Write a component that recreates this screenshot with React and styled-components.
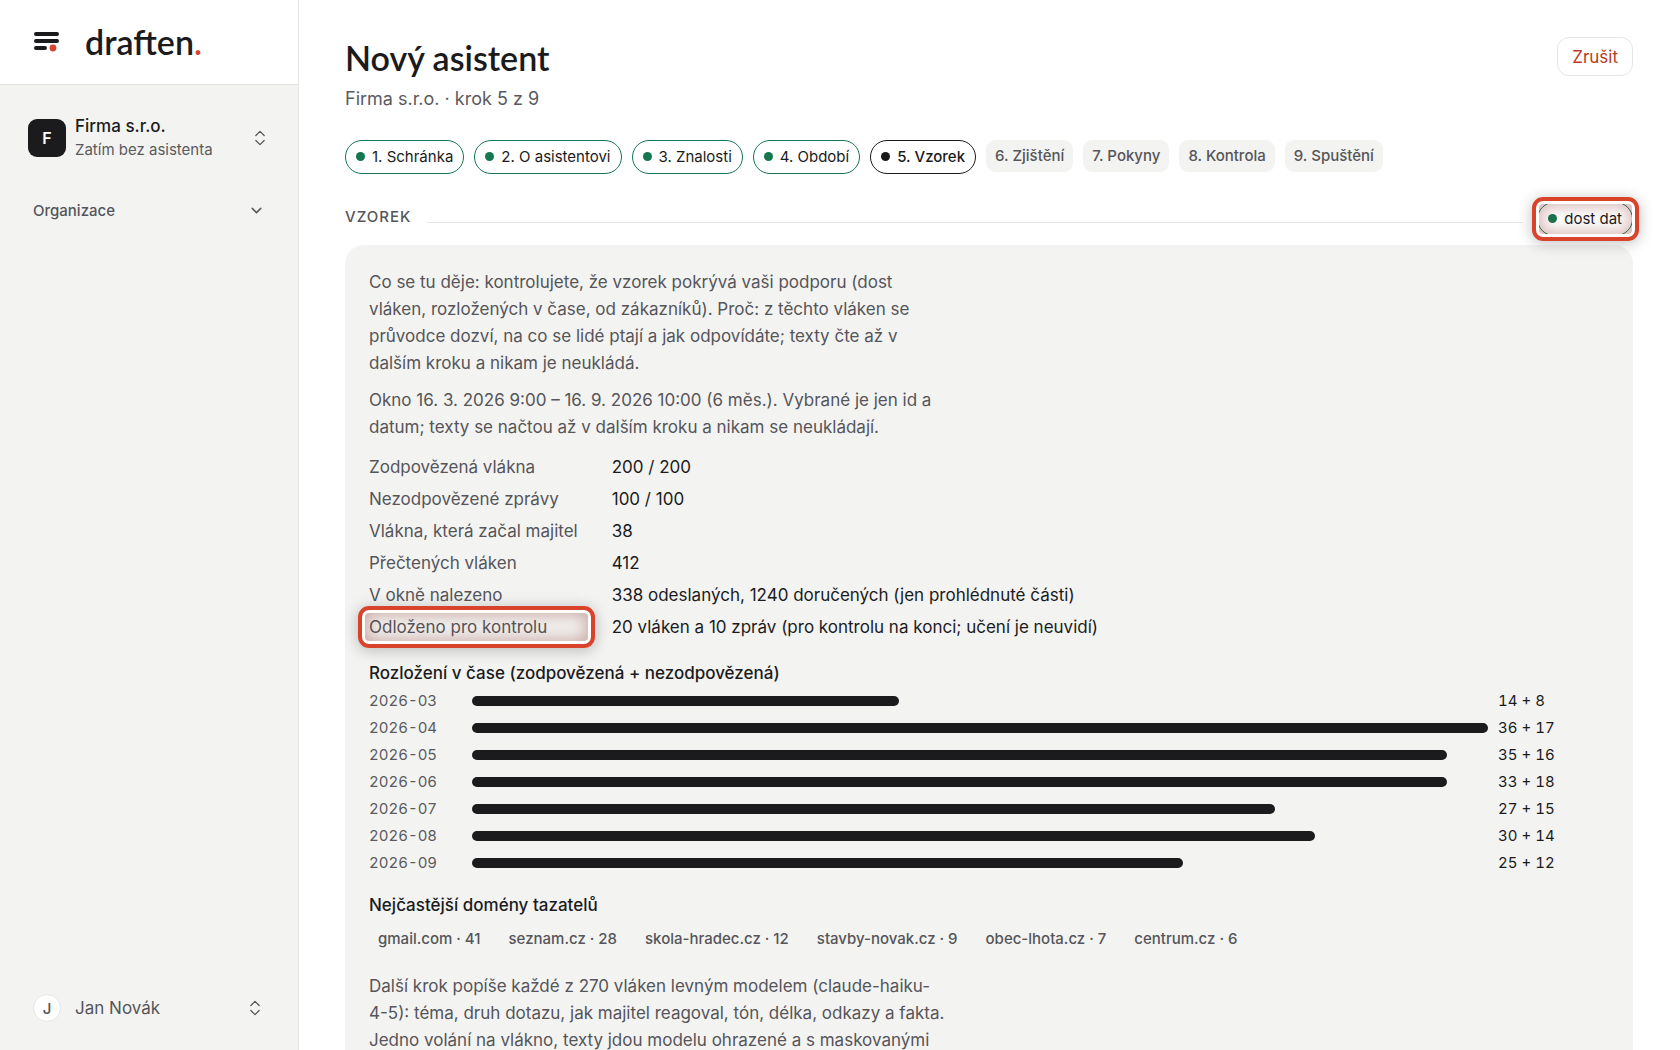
import React from 'react'
import styled, { createGlobalStyle, css } from 'styled-components'
import { ChevronDown, ChevronsUpDown } from 'lucide-react'

const GlobalStyle = createGlobalStyle`
  * {
    box-sizing: border-box;
  }

  body {
    margin: 0;
    background: #fff;
    color: #1b1b1d;
    font-family: Inter, 'Liberation Sans', sans-serif;
    font-size: 17px;
    line-height: 27px;
  }

  h1, h2, h3, p, ul, dl, dd {
    margin: 0;
    padding: 0;
  }

  button {
    font: inherit;
    color: inherit;
    background: none;
    border: 0;
    padding: 0;
    text-align: left;
    cursor: pointer;
  }
`

const Layout = styled.div`
  display: flex;
  height: 100vh;
`

const Sidebar = styled.aside`
  display: flex;
  flex-direction: column;
  flex: 0 0 299px;
  background: #f3f3f1;
  border-right: 1px solid #e6e6e4;
`

const Brand = styled.a`
  display: flex;
  align-items: center;
  gap: 24px;
  height: 85px;
  padding: 0 33px;
  background: #fff;
  border-bottom: 1px solid #e2e2e0;
  color: inherit;
  text-decoration: none;
`

const Wordmark = styled.span`
  font-family: Lato, sans-serif;
  font-size: 34px;
  font-weight: 600;
  line-height: 40px;

  span {
    color: #d9432c;
  }
`

const SidebarBody = styled.div`
  display: flex;
  flex-direction: column;
  flex: 1;
  padding: 28px 28px 22px;
`

const OrgButton = styled.button`
  display: flex;
  align-items: center;
  gap: 9px;
  height: 50px;
`

const OrgAvatar = styled.span`
  display: flex;
  align-items: center;
  justify-content: center;
  width: 38px;
  height: 38px;
  border-radius: 9px;
  background: #1b1b1d;
  color: #fff;
  font-size: 16px;
  font-weight: 600;
`

const OrgText = styled.span`
  flex: 1;
  display: flex;
  flex-direction: column;
  line-height: 24px;
`

const OrgName = styled.span`
  font-size: 17px;
  font-weight: 500;
`

const OrgNote = styled.span`
  font-size: 15px;
  color: #5a5a5e;
`

const NavGroup = styled.button`
  display: flex;
  align-items: center;
  justify-content: space-between;
  margin-top: 34px;
  padding: 0 5px;
  font-size: 15px;
  font-weight: 500;
  color: #55555a;
`

const UserButton = styled.button`
  display: flex;
  align-items: center;
  gap: 14px;
  margin-top: auto;
  padding: 0 5px;
  height: 40px;
  color: #55555a;
`

const UserAvatar = styled.span`
  display: flex;
  align-items: center;
  justify-content: center;
  width: 28px;
  height: 28px;
  border: 1px solid #e6e6e4;
  border-radius: 50%;
  background: #fff;
  font-size: 15px;
  font-weight: 500;
`

const UserName = styled.span`
  flex: 1;
`

const Main = styled.main`
  flex: 1;
  min-width: 0;
  padding: 37px 47px;
  padding-left: 46px;
  overflow-y: auto;
  scrollbar-width: none;
`

const PageHeader = styled.header`
  display: flex;
  align-items: flex-start;
  justify-content: space-between;
`

const Title = styled.h1`
  font-family: Lato, sans-serif;
  font-size: 34px;
  font-weight: 600;
  line-height: 42px;
`

const Subtitle = styled.p`
  margin-top: 5px;
  font-size: 18px;
  line-height: 30px;
  color: #5a5a5e;
`

const CancelButton = styled.button`
  padding: 6px 14px 4px;
  border: 1px solid #e6e6e4;
  border-radius: 12px;
  background: #fff;
  color: #b93a26;
  font-size: 17px;
`

const Steps = styled.ol`
  display: flex;
  flex-wrap: wrap;
  align-items: flex-start;
  gap: 10px;
  margin: 26px 0 0;
  padding: 0;
  list-style: none;
`

const pillColors = {
  done: '#14774f',
  current: '#1b1b1d'
}

const Pill = styled.span`
  position: relative;
  display: inline-flex;
  align-items: center;
  gap: 7px;
  height: 34px;
  padding: 0 10px 2px;
  border: 1px solid ${props => pillColors[props.$state]};
  border-radius: 17px;
  font-size: 15px;
  font-weight: ${props => (props.$state === 'current' ? 500 : 400)};
  white-space: nowrap;

  &::before {
    content: '';
    width: 9px;
    height: 9px;
    border-radius: 50%;
    background: ${props => pillColors[props.$state]};
  }
`

const Chip = styled.span`
  display: inline-flex;
  align-items: center;
  height: 32px;
  padding: 0 9px 2px;
  border-radius: 9px;
  background: #f3f3f1;
  color: #55555a;
  font-size: 15px;
  font-weight: 500;
  white-space: nowrap;
`

const SectionHeader = styled.div`
  display: flex;
  align-items: center;
  gap: 14px;
  margin-top: 28px;

  &::before {
    content: '';
    order: 1;
    flex: 1;
    height: 1px;
    margin-top: 6px;
    background: #e6e6e2;
  }
`

const SectionTitle = styled.h2`
  padding: 0 2px 5px 0;
  font-size: 15px;
  font-weight: 500;
  letter-spacing: 1px;
  text-transform: uppercase;
  color: #55555a;
`

const SectionStatus = styled.div`
  order: 2;
  display: flex;
`

// red frame laid over an element that the guide points at
const highlight = css`
  &::after {
    content: '';
    position: absolute;
    inset: ${props => props.$inset};
    border: 4px solid #d9432c;
    border-radius: 11px;
    box-shadow:
      inset 0 0 0 3px #fff,
      inset 0 0 16px 5px rgba(130, 40, 30, 0.36),
      0 2px 14px 1px rgba(0, 0, 0, 0.22);
    pointer-events: none;
  }
`

const MarkedPill = styled(Pill)`
  ${highlight}
`

const Panel = styled.section`
  margin-top: 9px;
  padding: 24px;
  border-radius: 19px;
  background: #f3f3f1;
`

const Text = styled.p`
  max-width: 577px;
  margin-top: ${props => props.$top || 0}px;
  color: #55555a;
`

const Stats = styled.dl`
  display: grid;
  grid-template-columns: max-content 1fr;
  gap: 5px 34px;
  margin-top: 13px;
`

const Term = styled.dt`
  position: relative;
  color: #55555a;
  ${props => props.$inset && highlight}
`

const PanelTitle = styled.h3`
  margin-top: ${props => props.$top}px;
  font-size: 17px;
  font-weight: 500;
`

const Months = styled.ul`
  list-style: none;
`

const Month = styled.li`
  display: grid;
  grid-template-columns: 93px 1fr 111px;
  align-items: center;
  gap: 10px;
  font-size: 15px;
  font-variant-numeric: tabular-nums;
`

const MonthName = styled.span`
  color: #5a5a5e;
`

const Bar = styled.span`
  height: 10px;
  border-radius: 5px;
  background: #1b1b1d;
`

const Domains = styled.ul`
  display: flex;
  flex-wrap: wrap;
  gap: 10px;
  margin-top: 4px;
  list-style: none;
`

const steps = [
  { name: 'Schránka', state: 'done' },
  { name: 'O asistentovi', state: 'done' },
  { name: 'Znalosti', state: 'done' },
  { name: 'Období', state: 'done' },
  { name: 'Vzorek', state: 'current' },
  { name: 'Zjištění' },
  { name: 'Pokyny' },
  { name: 'Kontrola' },
  { name: 'Spuštění' }
]

const stats = [
  { term: 'Zodpovězená vlákna', value: '200 / 200' },
  { term: 'Nezodpovězené zprávy', value: '100 / 100' },
  { term: 'Vlákna, která začal majitel', value: '38' },
  { term: 'Přečtených vláken', value: '412' },
  { term: 'V okně nalezeno', value: '338 odeslaných, 1240 doručených (jen prohlédnuté části)' },
  {
    term: 'Odloženo pro kontrolu',
    value: '20 vláken a 10 zpráv (pro kontrolu na konci; učení je neuvidí)',
    inset: '-8px -17px -7px -11px'
  }
]

const months = [
  { name: '2026-03', answered: 14, open: 8 },
  { name: '2026-04', answered: 36, open: 17 },
  { name: '2026-05', answered: 35, open: 16 },
  { name: '2026-06', answered: 33, open: 18 },
  { name: '2026-07', answered: 27, open: 15 },
  { name: '2026-08', answered: 30, open: 14 },
  { name: '2026-09', answered: 25, open: 12 }
]

const domains = [
  ['gmail.com', 41],
  ['seznam.cz', 28],
  ['skola-hradec.cz', 12],
  ['stavby-novak.cz', 9],
  ['obec-lhota.cz', 7],
  ['centrum.cz', 6]
]

const busiest = Math.max(...months.map(m => m.answered + m.open))

const LogoMark = () => (
  <svg width="28" height="24" viewBox="0 0 28 24" aria-hidden="true">
    <g stroke="#1b1b1d" strokeWidth="4" strokeLinecap="round">
      <path d="M3 4h21M3 11h21M3 18h9" />
    </g>
    <circle cx="20" cy="18" r="3.4" fill="#d9432c" />
  </svg>
)

const AppSidebar = () => (
  <Sidebar>
    <Brand href="#">
      <LogoMark />
      <Wordmark>draften<span>.</span></Wordmark>
    </Brand>
    <SidebarBody>
      <OrgButton>
        <OrgAvatar>F</OrgAvatar>
        <OrgText>
          <OrgName>Firma s.r.o.</OrgName>
          <OrgNote>Zatím bez asistenta</OrgNote>
        </OrgText>
        <ChevronsUpDown size={20} strokeWidth={1.5} color="#55555a" />
      </OrgButton>
      <NavGroup>
        Organizace
        <ChevronDown size={17} strokeWidth={2} />
      </NavGroup>
      <UserButton>
        <UserAvatar>J</UserAvatar>
        <UserName>Jan Novák</UserName>
        <ChevronsUpDown size={20} strokeWidth={1.5} />
      </UserButton>
    </SidebarBody>
  </Sidebar>
)

const App = () => (
  <Layout>
    <GlobalStyle />
    <AppSidebar />
    <Main>
      <PageHeader>
        <div>
          <Title>Nový asistent</Title>
          <Subtitle>Firma s.r.o. · krok 5 z 9</Subtitle>
        </div>
        <CancelButton>Zrušit</CancelButton>
      </PageHeader>

      <Steps>
        {steps.map((step, i) => (
          <li key={step.name}>
            {step.state
              ? <Pill $state={step.state}>{i + 1}. {step.name}</Pill>
              : <Chip>{i + 1}. {step.name}</Chip>}
          </li>
        ))}
      </Steps>

      <SectionHeader>
        <SectionTitle>Vzorek</SectionTitle>
        <SectionStatus>
          <MarkedPill $state="done" $inset="-6px -7px -6px -6px">dost dat</MarkedPill>
        </SectionStatus>
      </SectionHeader>

      <Panel>
        <Text>
          Co se tu děje: kontrolujete, že vzorek pokrývá vaši podporu (dost vláken,
          rozložených v čase, od zákazníků). Proč: z těchto vláken se průvodce dozví, na co
          se lidé ptají a jak odpovídáte; texty čte až v dalším kroku a nikam je neukládá.
        </Text>
        <Text $top={10}>
          Okno 16. 3. 2026 9:00 – 16. 9. 2026 10:00 (6 měs.). Vybrané je jen id a datum;
          texty se načtou až v dalším kroku a nikam se neukládají.
        </Text>

        <Stats>
          {stats.map(row => (
            <React.Fragment key={row.term}>
              <Term $inset={row.inset}>{row.term}</Term>
              <dd>{row.value}</dd>
            </React.Fragment>
          ))}
        </Stats>

        <PanelTitle $top={19}>Rozložení v čase (zodpovězená + nezodpovězená)</PanelTitle>
        <Months>
          {months.map(m => (
            <Month key={m.name}>
              <MonthName>{m.name}</MonthName>
              <Bar style={{ width: `${Math.round((m.answered + m.open) / busiest * 100)}%` }} />
              <span>{m.answered} + {m.open}</span>
            </Month>
          ))}
        </Months>

        <PanelTitle $top={16}>Nejčastější domény tazatelů</PanelTitle>
        <Domains>
          {domains.map(([name, count]) => (
            <li key={name}><Chip>{name} · {count}</Chip></li>
          ))}
        </Domains>

        <Text $top={18}>
          Další krok popíše každé z 270 vláken levným modelem (claude-haiku-4-5): téma,
          druh dotazu, jak majitel reagoval, tón, délka, odkazy a fakta. Jedno volání na
          vlákno, texty jdou modelu ohrazené a s maskovanými
        </Text>
      </Panel>
    </Main>
  </Layout>
)

export default App
